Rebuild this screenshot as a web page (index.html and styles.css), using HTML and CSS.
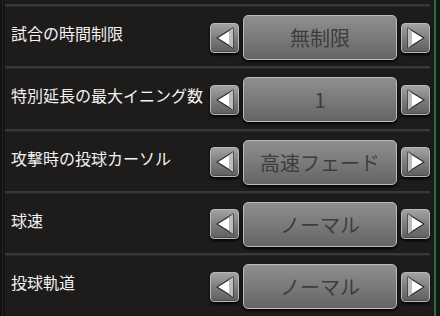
FILE: index.html
```html
<!DOCTYPE html>
<html lang="ja">
<head>
<meta charset="utf-8">
<link rel="stylesheet" href="styles.css">
</head>
<body>
<div class="screen">
  <div class="edge-left"></div>
  <div class="list">
    <div class="row">
      <div class="label">試合の時間制限</div>
      <div class="control">
        <div class="arrow"><svg viewBox="0 0 20 22" width="20" height="22"><polygon points="2,11 18,1 18,21" class="tri"/><polygon points="14,4 18,1 18,21 14,18" class="shade"/></svg></div>
        <div class="value">無制限</div>
        <div class="arrow"><svg viewBox="0 0 20 22" width="20" height="22"><polygon points="18,11 2,1 2,21" class="tri"/><polygon points="2,1 6,4 6,18 2,21" class="shade"/></svg></div>
      </div>
    </div>
    <div class="row">
      <div class="label">特別延長の最大イニング数</div>
      <div class="control">
        <div class="arrow"><svg viewBox="0 0 20 22" width="20" height="22"><polygon points="2,11 18,1 18,21" class="tri"/><polygon points="14,4 18,1 18,21 14,18" class="shade"/></svg></div>
        <div class="value">1</div>
        <div class="arrow"><svg viewBox="0 0 20 22" width="20" height="22"><polygon points="18,11 2,1 2,21" class="tri"/><polygon points="2,1 6,4 6,18 2,21" class="shade"/></svg></div>
      </div>
    </div>
    <div class="row">
      <div class="label">攻撃時の投球カーソル</div>
      <div class="control">
        <div class="arrow"><svg viewBox="0 0 20 22" width="20" height="22"><polygon points="2,11 18,1 18,21" class="tri"/><polygon points="14,4 18,1 18,21 14,18" class="shade"/></svg></div>
        <div class="value">高速フェード</div>
        <div class="arrow"><svg viewBox="0 0 20 22" width="20" height="22"><polygon points="18,11 2,1 2,21" class="tri"/><polygon points="2,1 6,4 6,18 2,21" class="shade"/></svg></div>
      </div>
    </div>
    <div class="row">
      <div class="label">球速</div>
      <div class="control">
        <div class="arrow"><svg viewBox="0 0 20 22" width="20" height="22"><polygon points="2,11 18,1 18,21" class="tri"/><polygon points="14,4 18,1 18,21 14,18" class="shade"/></svg></div>
        <div class="value">ノーマル</div>
        <div class="arrow"><svg viewBox="0 0 20 22" width="20" height="22"><polygon points="18,11 2,1 2,21" class="tri"/><polygon points="2,1 6,4 6,18 2,21" class="shade"/></svg></div>
      </div>
    </div>
    <div class="row">
      <div class="label">投球軌道</div>
      <div class="control">
        <div class="arrow"><svg viewBox="0 0 20 22" width="20" height="22"><polygon points="2,11 18,1 18,21" class="tri"/><polygon points="14,4 18,1 18,21 14,18" class="shade"/></svg></div>
        <div class="value">ノーマル</div>
        <div class="arrow"><svg viewBox="0 0 20 22" width="20" height="22"><polygon points="18,11 2,1 2,21" class="tri"/><polygon points="2,1 6,4 6,18 2,21" class="shade"/></svg></div>
      </div>
    </div>
  </div>
  <div class="edge-right"></div>
</div>
</body>
</html>
```
FILE: styles.css
```css
html, body {
  margin: 0;
  padding: 0;
  background: #1c1a1a;
}
.screen {
  width: 440px;
  height: 316px;
  display: flex;
  overflow: hidden;
  background: #1e1b1b;
  font-family: "Noto Sans CJK JP", "Noto Sans", sans-serif;
}
.edge-left {
  width: 5px;
  flex: none;
  background: linear-gradient(to right, #121212 0 2px, #262626 2px 3px, #141414 3px);
}
.edge-right {
  width: 8px;
  flex: none;
  background: linear-gradient(to right, #171717 0 2px, #2f6b3e 2px 4px, #0e1a11 4px);
}
.list {
  flex: 1;
  padding-top: 4px;
  padding-right: 2px;
  display: flex;
  flex-direction: column;
}
.row {
  height: 60.25px;
  flex: none;
  border-top: 2px solid #393737;
  box-shadow: inset 0 1px 0 #2a2727;
  display: flex;
  align-items: center;
  padding-left: 6px;
  box-sizing: content-box;
}
.label {
  flex: 1;
  color: #f2f2f2;
  font-size: 16px;
  white-space: nowrap;
  margin-top: -6px;
}
.control {
  display: flex;
  align-items: center;
  gap: 4px;
  margin-top: 3px;
}
.arrow {
  width: 29px;
  height: 30px;
  box-sizing: border-box;
  border: 1px solid #b9b9b9;
  border-radius: 4px;
  background: linear-gradient(to bottom, #a3a3a3, #7a7a7a 55%, #5f5f5f);
  box-shadow: 0 2px 3px rgba(0,0,0,0.9), inset 0 -1px 0 #4a4a4a;
  display: flex;
  align-items: center;
  justify-content: center;
}
.tri {
  fill: #ffffff;
  stroke: #2e2e2e;
  stroke-width: 1.2;
  stroke-linejoin: round;
}
.shade {
  fill: #bdbdbd;
}
.value {
  width: 154px;
  height: 45px;
  box-sizing: border-box;
  border: 1px solid #bcbcbc;
  border-radius: 5px;
  background: linear-gradient(to bottom, #8f8f8f, #7a7a7a 50%, #646464);
  box-shadow: 0 2px 3px rgba(0,0,0,0.9);
  display: flex;
  align-items: center;
  justify-content: center;
  color: #3d3d3d;
  font-size: 20px;
}
```
